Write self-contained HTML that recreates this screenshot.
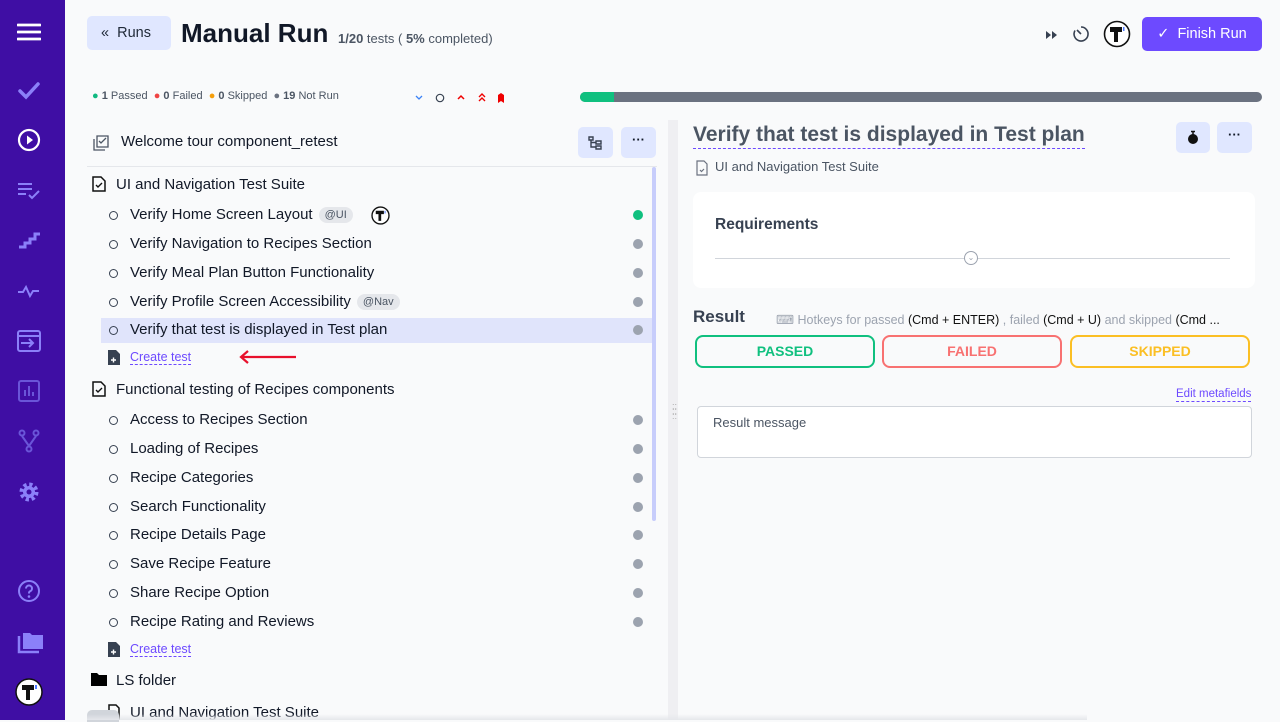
<!DOCTYPE html>
<html><head><meta charset="utf-8"><style>
*{box-sizing:border-box;margin:0;padding:0}
body{width:1280px;height:720px;overflow:hidden;background:#f9fafb;font-family:"Liberation Sans",sans-serif;color:#111827;position:relative}
.abs{position:absolute}
.sb{left:0;top:0;width:65px;height:720px;background:#3f0ea4}
.sb svg{position:absolute;left:17px}
.row{position:absolute;left:101px;width:551px;height:24px;font-size:15px;line-height:24px}
.row .c{position:absolute;left:8px;top:8px;width:9px;height:9px;border:1.3px solid #374151;border-radius:50%}
.row .t{position:absolute;left:29px}
.row .d{position:absolute;right:9px;top:7px;width:10px;height:10px;border-radius:50%;background:#9ca3af}
.tag{display:inline-block;background:#e5e7eb;color:#4b5563;font-size:11px;line-height:16px;padding:0 6px;border-radius:8px;margin-left:6px;vertical-align:1px}
.btn{background:#e0e7ff;border-radius:5px}
.link{color:#6d4aff;font-size:12.5px;border-bottom:1px dashed #6d4aff;line-height:14px}
.rb{position:absolute;top:335px;width:180px;height:33px;border:2px solid;border-radius:8px;text-align:center;font-size:14px;font-weight:bold;line-height:29px}
</style></head><body>
<div class="abs sb">
<svg style="top:20px" width="24" height="24" viewBox="0 0 24 24"><path d="M1 5h22M1 12h22M1 19h22" stroke="#fff" stroke-width="2.8" stroke-linecap="round"/></svg>
<svg style="top:79px" width="24" height="24" viewBox="0 0 24 24"><path d="M3 12l6 6L21 5" stroke="#8b80f9" stroke-width="3.5" fill="none" stroke-linecap="round"/></svg>
<svg style="top:128px" width="24" height="24" viewBox="0 0 24 24"><circle cx="12" cy="12" r="10" stroke="#fff" stroke-width="2.2" fill="none"/><path d="M10 7.5l6 4.5-6 4.5z" fill="#fff"/></svg>
<svg style="top:178px" width="24" height="24" viewBox="0 0 24 24"><path d="M1 6h14M1 11h14M1 16h8M12 17l3 3 7-7" stroke="#8b80f9" stroke-width="2" fill="none"/></svg>
<svg style="top:228px" width="24" height="24" viewBox="0 0 24 24"><path d="M2 19h6v-4h5v-4h5V6h5" stroke="#8b80f9" stroke-width="3" fill="none"/></svg>
<svg style="top:279px" width="24" height="24" viewBox="0 0 24 24"><path d="M1 13h5l3-5 4 9 3-5h6" stroke="#8b80f9" stroke-width="2" fill="none"/></svg>
<svg style="top:329px" width="24" height="24" viewBox="0 0 24 24"><rect x="1" y="2" width="22" height="20" rx="2" stroke="#8b80f9" stroke-width="2" fill="none"/><path d="M1 7h22M4 14h12M12 10l4 4-4 4" stroke="#8b80f9" stroke-width="2" fill="none"/></svg>
<svg style="top:379px" width="24" height="24" viewBox="0 0 24 24"><rect x="2" y="2" width="20" height="20" rx="2" stroke="#6a55d8" stroke-width="2" fill="none"/><path d="M8 17v-6M12 17V7M16 17v-4" stroke="#6a55d8" stroke-width="2"/></svg>
<svg style="top:429px" width="24" height="24" viewBox="0 0 24 24"><circle cx="5" cy="4" r="2.5" stroke="#6a55d8" stroke-width="2" fill="none"/><circle cx="19" cy="4" r="2.5" stroke="#6a55d8" stroke-width="2" fill="none"/><circle cx="12" cy="20" r="2.5" stroke="#6a55d8" stroke-width="2" fill="none"/><path d="M5 7l7 10M19 7l-7 10" stroke="#6a55d8" stroke-width="2"/></svg>
<svg style="top:480px" width="24" height="24" viewBox="0 0 24 24"><circle cx="12" cy="12" r="7" stroke="#8b80f9" stroke-width="5" fill="none" stroke-dasharray="3 2.5"/><circle cx="12" cy="12" r="6" fill="#8b80f9"/><circle cx="12" cy="12" r="2.5" fill="#3f0ea4"/></svg>
<svg style="top:579px" width="24" height="24" viewBox="0 0 24 24"><circle cx="12" cy="12" r="10" stroke="#8b80f9" stroke-width="2" fill="none"/><path d="M9 9.5a3 3 0 1 1 4 2.8c-1 .4-1 1-1 2.2" stroke="#8b80f9" stroke-width="2" fill="none"/><circle cx="12" cy="17.5" r="1.3" fill="#8b80f9"/></svg>
<svg style="top:630px" width="28" height="26" viewBox="0 0 28 26"><path d="M2 6v16h20" stroke="#8b80f9" stroke-width="2.5" fill="none"/><path d="M6 3h7l2 2h11v14H6z" fill="#8b80f9"/></svg>
<svg style="top:678px;left:15px" width="28" height="28" viewBox="0 0 28 28"><circle cx="14" cy="14" r="13" fill="#fff" stroke="#111" stroke-width="1.5"/><path d="M7 7h12v5h-4v10h-4V12H7z" fill="#111"/><path d="M20 7h2v4h-2z" fill="#4f7bff"/></svg>
</div>

<div class="abs btn" style="left:87px;top:16px;width:84px;height:34px;font-size:14.5px;line-height:34px;padding-left:14px;color:#1f2937">«&nbsp;&nbsp;Runs</div>
<div class="abs" style="left:181px;top:18px;font-size:26px;font-weight:bold;color:#111827">Manual Run</div>
<div class="abs" style="left:338px;top:31px;font-size:13px;color:#4b5563"><b>1/20</b> tests ( <b>5%</b> completed)</div>

<svg class="abs" style="left:1044px;top:28px" width="16" height="14" viewBox="0 0 16 14"><path d="M2 3l5 4-5 4zM8 3l5 4-5 4z" fill="#374151"/></svg>
<svg class="abs" style="left:1072px;top:25px" width="18" height="18" viewBox="0 0 18 18"><path d="M9 2a7 7 0 1 1-6 3.5" stroke="#374151" stroke-width="1.6" fill="none"/><path d="M5 5l4 4" stroke="#374151" stroke-width="1.6"/></svg>
<svg class="abs" style="left:1103px;top:20px" width="28" height="28" viewBox="0 0 28 28"><circle cx="14" cy="14" r="12.5" fill="#fff" stroke="#111" stroke-width="1.6"/><path d="M7 7h12v5h-4v10h-4V12H7z" fill="#111"/><path d="M20 7h1.5v4H20z" fill="#4f7bff"/></svg>
<div class="abs" style="left:1142px;top:17px;width:120px;height:34px;background:#6d4aff;border-radius:5px;color:#fff;font-size:14.5px;line-height:34px;text-align:center">✓&nbsp; Finish Run</div>

<div class="abs" style="left:92px;top:90px;font-size:11px;color:#4b5563;white-space:nowrap">
<span style="color:#10b981">●</span> <b>1</b> Passed &nbsp;<span style="color:#ef4444">●</span> <b>0</b> Failed &nbsp;<span style="color:#f59e0b">●</span> <b>0</b> Skipped &nbsp;<span style="color:#6b7280">●</span> <b>19</b> Not Run</div>
<svg class="abs" style="left:414px;top:92px" width="98" height="12" viewBox="0 0 98 12"><path d="M2 4l3 3 3-3" stroke="#3b82f6" stroke-width="1.3" fill="none"/><circle cx="26" cy="6" r="3.7" stroke="#374151" stroke-width="1.2" fill="none"/><path d="M44 7l3-3 3 3" stroke="#ef0000" stroke-width="1.5" fill="none"/><path d="M65 5l3-3 3 3M65 9l3-3 3 3" stroke="#ef0000" stroke-width="1.4" fill="none"/><path d="M84 11V3l3-2 3 2v8l-3-2z" fill="#ef0000"/></svg>
<div class="abs" style="left:580px;top:92px;width:682px;height:10px;background:#6b7280;border-radius:5px;overflow:hidden"><div style="width:34px;height:10px;background:#10c07f"></div></div>

<svg class="abs" style="left:92px;top:134px" width="18" height="18" viewBox="0 0 18 18"><path d="M2 5v11h11" stroke="#4b5563" stroke-width="1.3" fill="none"/><path d="M5 2h11v11H5z" stroke="#4b5563" stroke-width="1.3" fill="none"/><path d="M7 7l2 2 5-5" stroke="#4b5563" stroke-width="1.3" fill="none"/></svg>
<div class="abs" style="left:121px;top:133px;font-size:15px">Welcome tour component_retest</div>
<div class="abs btn" style="left:578px;top:127px;width:35px;height:31px"><svg style="margin:9px 0 0 10px" width="14" height="14" viewBox="0 0 14 14"><path d="M1 1h4v3H1zM8 5h5v3H8zM8 10h5v3H8zM3 4v7h5M3 6.5h5" stroke="#374151" stroke-width="1.4" fill="none"/></svg></div>
<div class="abs btn" style="left:621px;top:127px;width:35px;height:31px;text-align:center;font-size:13px;line-height:26px;font-weight:bold">···</div>
<div class="abs" style="left:87px;top:166px;width:570px;height:1px;background:#e5e7eb"></div>
<div class="abs" style="left:652px;top:167px;width:4px;height:354px;background:#c7cdfb;border-radius:2px"></div>
<div class="abs" style="left:668px;top:120px;width:10px;height:600px;background:#efeff2"></div>
<div class="abs" style="left:672px;top:404px;color:#aaa;font-size:9px;line-height:5px">::<br>::<br>::</div>

<svg class="abs" style="left:92px;top:176px" width="14" height="16" viewBox="0 0 14 16"><path d="M1 1h8l4 4v10H1z" stroke="#111" stroke-width="1.5" fill="none"/><path d="M4 9l2 2 4-4" stroke="#111" stroke-width="1.4" fill="none"/></svg>
<div class="abs" style="left:116px;top:176px;font-size:15px">UI and Navigation Test Suite</div>

<div class="row" style="top:203px"><span class="c"></span><span class="t">Verify Home Screen Layout<span class="tag">@UI</span></span>
<svg class="abs" style="left:270px;top:3px" width="19" height="19" viewBox="0 0 28 28"><circle cx="14" cy="14" r="12.5" fill="#fff" stroke="#111" stroke-width="2"/><path d="M7 7h12v5h-4v10h-4V12H7z" fill="#111"/><path d="M20 7h1.5v4H20z" fill="#4f7bff"/></svg>
<span class="d" style="background:#10c07f"></span></div>
<div class="row" style="top:232px"><span class="c"></span><span class="t">Verify Navigation to Recipes Section</span><span class="d"></span></div>
<div class="row" style="top:261px"><span class="c"></span><span class="t">Verify Meal Plan Button Functionality</span><span class="d"></span></div>
<div class="row" style="top:290px"><span class="c"></span><span class="t">Verify Profile Screen Accessibility<span class="tag">@Nav</span></span><span class="d"></span></div>
<div class="row" style="top:318px;background:#e0e4fb;height:25px"><span class="c"></span><span class="t">Verify that test is displayed in Test plan</span><span class="d"></span></div>
<svg class="abs" style="left:108px;top:350px" width="12" height="15" viewBox="0 0 12 15"><path d="M0 0h8l4 4v11H0z" fill="#374151"/><path d="M3 10h5M5.5 7.5v5" stroke="#fff" stroke-width="1.4"/></svg>
<div class="abs link" style="left:130px;top:350px">Create test</div>
<svg class="abs" style="left:238px;top:350px" width="60" height="14" viewBox="0 0 60 14"><path d="M58 7H4M10 1L3 7l7 6" stroke="#e8102c" stroke-width="2.2" fill="none"/></svg>

<svg class="abs" style="left:92px;top:381px" width="14" height="16" viewBox="0 0 14 16"><path d="M1 1h8l4 4v10H1z" stroke="#111" stroke-width="1.5" fill="none"/><path d="M4 9l2 2 4-4" stroke="#111" stroke-width="1.4" fill="none"/></svg>
<div class="abs" style="left:116px;top:381px;font-size:15px">Functional testing of Recipes components</div>
<div class="row" style="top:408px"><span class="c"></span><span class="t">Access to Recipes Section</span><span class="d"></span></div>
<div class="row" style="top:437px"><span class="c"></span><span class="t">Loading of Recipes</span><span class="d"></span></div>
<div class="row" style="top:466px"><span class="c"></span><span class="t">Recipe Categories</span><span class="d"></span></div>
<div class="row" style="top:495px"><span class="c"></span><span class="t">Search Functionality</span><span class="d"></span></div>
<div class="row" style="top:523px"><span class="c"></span><span class="t">Recipe Details Page</span><span class="d"></span></div>
<div class="row" style="top:552px"><span class="c"></span><span class="t">Save Recipe Feature</span><span class="d"></span></div>
<div class="row" style="top:581px"><span class="c"></span><span class="t">Share Recipe Option</span><span class="d"></span></div>
<div class="row" style="top:610px"><span class="c"></span><span class="t">Recipe Rating and Reviews</span><span class="d"></span></div>
<svg class="abs" style="left:108px;top:642px" width="12" height="15" viewBox="0 0 12 15"><path d="M0 0h8l4 4v11H0z" fill="#374151"/><path d="M3 10h5M5.5 7.5v5" stroke="#fff" stroke-width="1.4"/></svg>
<div class="abs link" style="left:130px;top:642px">Create test</div>
<svg class="abs" style="left:91px;top:673px" width="16" height="13" viewBox="0 0 16 13"><path d="M0 0h6l2 2h8v11H0z" fill="#000"/></svg>
<div class="abs" style="left:116px;top:672px;font-size:15px">LS folder</div>
<svg class="abs" style="left:108px;top:704px" width="12" height="16" viewBox="0 0 12 16"><path d="M1 1h7l3 3v12H1z" stroke="#111" stroke-width="1.5" fill="none"/></svg>
<div class="abs" style="left:130px;top:704px;font-size:15px">UI and Navigation Test Suite</div>
<div class="abs" style="left:87px;top:710px;width:32px;height:12px;background:#d1d5db;border-radius:5px 5px 0 0"></div>
<div class="abs" style="left:87px;top:714px;width:1000px;height:6px;background:linear-gradient(#f9fafb00,#e5e7eb)"></div>

<div class="abs" style="left:693px;top:122px;font-size:21px;font-weight:bold;color:#4b5563;border-bottom:1.5px dashed #6d4aff;line-height:26px">Verify that test is displayed in Test plan</div>
<div class="abs btn" style="left:1176px;top:122px;width:34px;height:31px"><svg style="margin:8px 0 0 10px" width="14" height="15" viewBox="0 0 14 15"><circle cx="7" cy="9" r="5" fill="#111"/><path d="M5 1.5h4M7 1.5v3" stroke="#111" stroke-width="1.5"/></svg></div>
<div class="abs btn" style="left:1217px;top:122px;width:35px;height:31px;text-align:center;font-size:13px;line-height:26px;font-weight:bold">···</div>
<svg class="abs" style="left:696px;top:160px" width="12" height="16" viewBox="0 0 12 16"><path d="M1 1h7l3 3v11H1z" stroke="#6b7280" stroke-width="1.2" fill="none"/><path d="M4 10l1.5 1.5L8 9" stroke="#6b7280" stroke-width="1.2" fill="none"/></svg>
<div class="abs" style="left:715px;top:159px;font-size:13px;color:#4b5563">UI and Navigation Test Suite</div>

<div class="abs" style="left:693px;top:192px;width:562px;height:96px;background:#fff;border-radius:8px"></div>
<div class="abs" style="left:715px;top:216px;font-size:15.5px;font-weight:bold;color:#374151">Requirements</div>
<div class="abs" style="left:715px;top:258px;width:515px;height:1px;background:#d1d5db"></div>
<div class="abs" style="left:964px;top:251px;width:14px;height:14px;border:1px solid #9ca3af;border-radius:50%;background:#fff;font-size:8px;line-height:12px;text-align:center;color:#9ca3af">⌄</div>

<div class="abs" style="left:693px;top:307px;font-size:17px;font-weight:bold;color:#374151">Result</div>
<div class="abs" style="left:776px;top:312px;font-size:12.5px;color:#9ca3af;white-space:nowrap">⌨ Hotkeys for passed <span style="color:#111">(Cmd + ENTER)</span> , failed <span style="color:#111">(Cmd + U)</span> and skipped <span style="color:#111">(Cmd ...</span></div>
<div class="rb" style="left:695px;border-color:#10c07f;color:#10c07f">PASSED</div>
<div class="rb" style="left:882px;border-color:#f87171;color:#f87171">FAILED</div>
<div class="rb" style="left:1070px;border-color:#fbbf24;color:#fbbf24">SKIPPED</div>
<div class="abs link" style="left:1176px;top:387px;font-size:11.5px">Edit metafields</div>
<div class="abs" style="left:697px;top:406px;width:555px;height:52px;background:#fff;border:1px solid #d1d5db;border-radius:4px;padding:8px 15px;font-size:13px;color:#4b5563">Result message</div>
</body></html>
